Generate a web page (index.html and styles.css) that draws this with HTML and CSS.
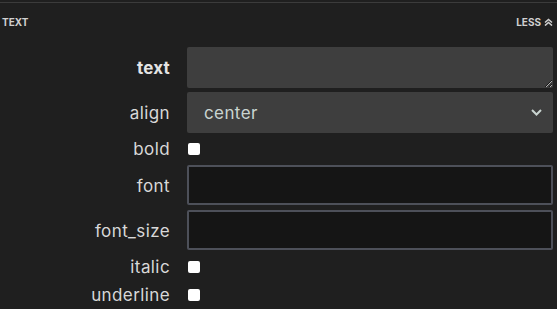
FILE: index.html
```html
<!DOCTYPE html>
<html lang="en">
<head>
  <meta charset="UTF-8">
  <title>Text</title>
  <link rel="stylesheet" href="styles.css">
</head>
<body>
  <div class="panel">
    <!-- 标题栏 -->
    <div class="panel-head">
      <span class="panel-title">TEXT</span>
      <span class="panel-toggle">LESS
        <svg width="9" height="8" viewBox="0 0 9 8"><path d="M1 4.5 L4.5 1.5 L8 4.5 M1 7.5 L4.5 4.5 L8 7.5" fill="none" stroke="#cfcfcf" stroke-width="1.6"/></svg>
      </span>
    </div>

    <!-- 参数表单 -->
    <div class="form">
      <label class="label label-bold">text</label>
      <textarea class="field field-area"></textarea>

      <label class="label">align</label>
      <div class="field field-select">
        <span>center</span>
        <svg width="11" height="7" viewBox="0 0 11 7"><path d="M1 1 L5.5 5.5 L10 1" fill="none" stroke="#c9d4d0" stroke-width="2"/></svg>
      </div>

      <label class="label label-check">bold</label>
      <div class="check-cell"><input type="checkbox" class="check"></div>

      <label class="label">font</label>
      <input type="text" class="field field-input">

      <label class="label">font_size</label>
      <input type="text" class="field field-input">

      <label class="label label-check">italic</label>
      <div class="check-cell"><input type="checkbox" class="check"></div>

      <label class="label label-check">underline</label>
      <div class="check-cell"><input type="checkbox" class="check"></div>
    </div>
  </div>
</body>
</html>
```

FILE: styles.css
```css
body {
  margin: 0;
  background: #1f1f1f;
  font-family: Inter, "Noto Sans", sans-serif;
  color: #d2d2d2;
}

.panel {
  border-top: 1px solid #3b3b3b;
  margin-top: 2px;
}

.panel-head {
  display: flex;
  justify-content: space-between;
  align-items: center;
  height: 38px;
  padding: 0 4px 0 2px;
  font-size: 10px;
  font-weight: 700;
  color: #d0d0d0;
}

.panel-toggle {
  display: flex;
  align-items: center;
  gap: 3px;
}

.form {
  display: grid;
  grid-template-columns: 170px 1fr;
  column-gap: 17px;
  row-gap: 4px;
  padding-right: 4px;
  margin-top: 6px;
}

.label {
  display: flex;
  align-items: center;
  justify-content: flex-end;
  height: 41px;
  font-size: 17px;
  letter-spacing: 0.4px;
  color: #d8d8d8;
}

.label-bold {
  font-weight: 700;
  color: #e4e4e4;
  letter-spacing: 0.2px;
}

.field {
  box-sizing: border-box;
  height: 41px;
  width: 100%;
  margin: 0;
  font-family: inherit;
  font-size: 17px;
  letter-spacing: 0.4px;
  border-radius: 2px;
}

.check-cell,
.label-check {
  height: 24px;
}

.field-area {
  background: #3e3e3e;
  border: none;
  resize: vertical;
  color: #ddd;
}

.field-select {
  background: #3e3e3e;
  display: flex;
  justify-content: space-between;
  align-items: center;
  padding: 0 11px 0 17px;
  color: #c9d4d0;
}

.field-input {
  background: #151515;
  border: 2px solid #4d5059;
  color: #ddd;
  height: 40px;
}

.check-cell {
  display: flex;
  align-items: center;
}

.check {
  appearance: none;
  width: 12px;
  height: 12px;
  margin: 0 0 0 1px;
  background: #fff;
  border-radius: 2px;
}
```
